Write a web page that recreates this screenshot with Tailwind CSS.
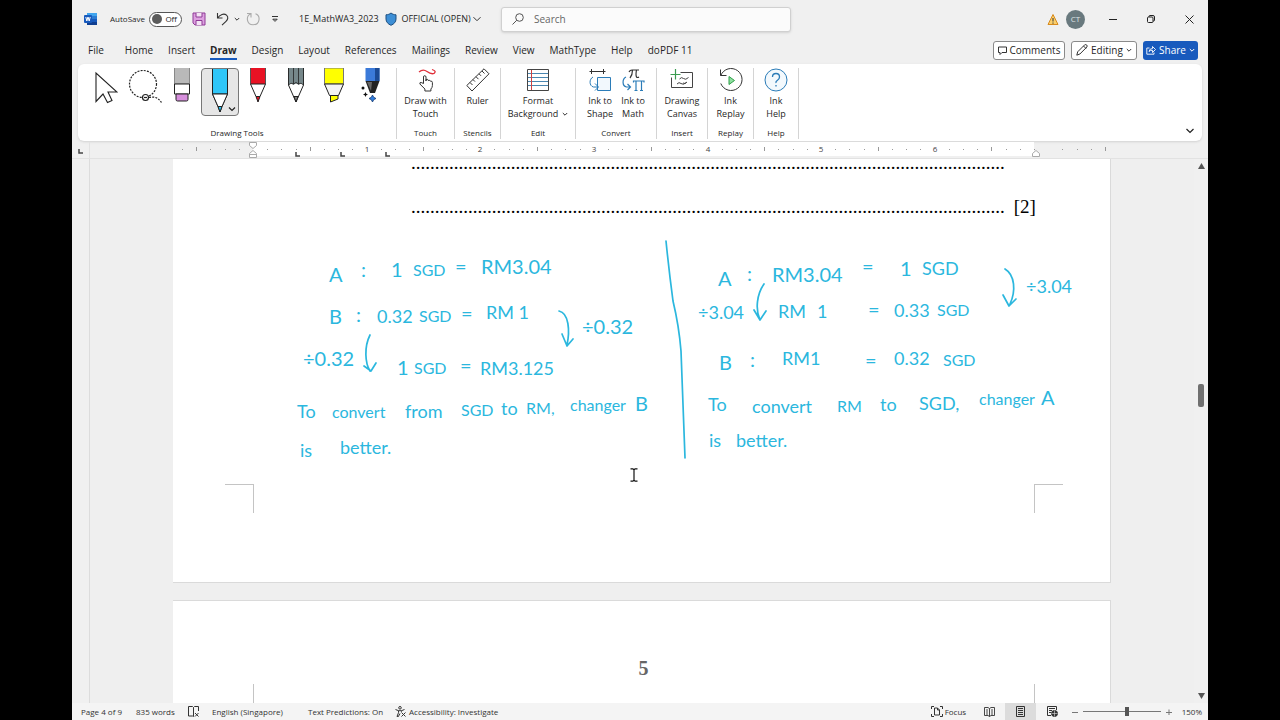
<!DOCTYPE html>
<html lang="en">
<head>
    <meta charset="UTF-8">
    <meta name="viewport" content="width=device-width, initial-scale=1.0">
    <title>1E_MathWA3_2023 - Word</title>
    <script src="https://cdn.jsdelivr.net/npm/@tailwindcss/browser@4"></script>
</head>

<body class="bg-black px-[72px] font-['Open_Sans',sans-serif] text-[#262626]">
<div class="flex flex-col h-screen bg-[#f0f0f0] overflow-hidden">

    <!-- Title bar -->
    <header class="flex items-center h-[38px] shrink-0 text-[9px] whitespace-nowrap">
        <div class="flex items-center w-[429px] shrink-0 pl-3">
            <svg class="w-[14px] h-[14px]" viewBox="0 0 14 14">
                <path d="M3 1h10v3H3z" fill="#41a5ee"/><path d="M3 4h10v3H3z" fill="#2b7cd3"/>
                <path d="M3 7h10v3H3z" fill="#185abd"/><path d="M3 10h10v3H3z" fill="#103f91"/>
                <rect x="0" y="3" width="8" height="8" rx="1" fill="#185abd"/>
                <path d="M1.800 5l1 4 1.200-4 1.200 4 1-4" fill="none" stroke="#fff" stroke-width="1"/>
            </svg>
            <label for="autosave" class="ml-3 w-[39px] text-[8px]">AutoSave</label>
            <span class="relative flex items-center w-[33px] h-[15px]">
                <input id="autosave" type="checkbox" class="appearance-none w-full h-full rounded-full border border-[#555] bg-white">
                <span class="absolute left-[3px] w-[10px] h-[10px] rounded-full bg-[#5c5c5c]"></span>
                <span class="absolute right-[5px] text-[8px]">Off</span>
            </span>
            <button aria-label="Save" class="ml-[10px]">
                <svg class="w-[14px] h-[14px]" viewBox="0 0 14 14" fill="#dda0e0" stroke="#8e3a96"><path d="M1 1h12v12H3l-2-2z"/><path d="M4 1v4h6V1M4 13V8.500h6V13" fill="#f3e3f4"/></svg>
            </button>
            <button aria-label="Undo" class="ml-[10px]">
                <svg class="w-[14px] h-[14px]" viewBox="0 0 14 14" fill="none" stroke="#333" stroke-width="1.100"><path d="M1.500 1v5h5M1.500 6C4 2.500 8 1 10.500 3.200c2.300 2 1.200 4.600-.5 6.200L6 13.200"/></svg>
            </button>
            <button aria-label="Undo history" class="ml-1">
                <svg class="w-[6px] h-[6px]" viewBox="0 0 6 6" fill="none" stroke="#333"><path d="M.8 2l2.200 2.200L5.200 2"/></svg>
            </button>
            <button aria-label="Repeat" class="ml-[6px]">
                <svg class="w-[14px] h-[14px]" viewBox="0 0 14 14" fill="none" stroke="#aaa" stroke-width="1.100"><path d="M1 1.500h4v4M4.800 1.800C-.5 4 .5 12.800 7 12.800c7 0 8-9 2.500-11"/></svg>
            </button>
            <button aria-label="Customize toolbar" class="ml-3">
                <svg class="w-[6px] h-[8px]" viewBox="0 0 6 8" fill="none" stroke="#333"><path d="M0 1.500h6M.8 4.200L3 6.400l2.200-2.200z"/></svg>
            </button>
            <span class="ml-[21px] w-[80px]">1E_MathWA3_2023</span>
            <button class="flex items-center ml-[6px]">
                <svg class="w-3 h-[14px]" viewBox="0 0 12 14"><path d="M6 1C4.500 2.200 3 2.700 1 2.800V7c0 3 2 5 5 6.300C9 12 11 10 11 7V2.800C9 2.700 7.500 2.200 6 1z" fill="#3d8fd6" stroke="#1d4f80"/></svg>
                <span class="ml-1 w-[70px]">OFFICIAL (OPEN)</span>
                <svg class="ml-[2px] w-2 h-2" viewBox="0 0 8 8" fill="none" stroke="#333"><path d="M.5 2.200L4 5.700l3.500-3.500"/></svg>
            </button>
        </div>
        <label class="flex items-center w-[290px] h-[25px] px-[10px] gap-[10px] bg-[#fbfbfb] border border-[#d0d0d0] rounded-[3px] shadow-sm">
            <svg class="w-3 h-3" viewBox="0 0 12 12" fill="none" stroke="#555"><circle cx="7.500" cy="4.500" r="3.800"/><path d="M4.800 7.200L.5 11.500"/></svg>
            <input type="text" aria-label="Search" placeholder="Search" class="flex-1 text-[10px] outline-none placeholder:text-[#666]">
        </label>
        <div class="flex items-center ml-auto pr-[14px]">
            <svg class="w-3 h-[13px]" viewBox="0 0 12 13"><path d="M6 1.500l5 10H1z" fill="#fbcf6b" stroke="#d78a1c"/><path d="M6 5v3.500M6 9.500v1.200" stroke="#333"/></svg>
            <button class="ml-[7px] w-[19px] h-[19px] rounded-full bg-[#69797e] text-[8px] text-[#dde3e5]">CT</button>
            <button aria-label="Minimize" class="ml-6"><svg class="w-2 h-2" viewBox="0 0 8 8" stroke="#222"><path d="M0 4.500h8"/></svg></button>
            <button aria-label="Restore" class="ml-[30px]"><svg class="w-2 h-2" viewBox="0 0 8 8" fill="none" stroke="#222"><rect x=".5" y="2" width="5.500" height="5.500" rx="1"/><path d="M2 2V1.500q0-1 1-1h3q1.500 0 1.500 1.500v3q0 1-1 1H6"/></svg></button>
            <button aria-label="Close" class="ml-[30px]"><svg class="w-[9px] h-[9px]" viewBox="0 0 9 9" stroke="#222"><path d="M.5.5l8 8M8.500.5l-8 8"/></svg></button>
        </div>
    </header>

    <!-- Ribbon tabs -->
    <nav class="flex items-center h-[24px] shrink-0 pl-4 pr-[10px] text-[10px] whitespace-nowrap">
        <div class="flex items-center gap-[15px]">
            <a href="#" class="mr-[6px]">File</a>
            <a href="#">Home</a>
            <a href="#">Insert</a>
            <a href="#" class="font-bold border-b-2 border-[#185abd] leading-[16px] mt-[2px]">Draw</a>
            <a href="#">Design</a>
            <a href="#">Layout</a>
            <a href="#">References</a>
            <a href="#">Mailings</a>
            <a href="#">Review</a>
            <a href="#">View</a>
            <a href="#">MathType</a>
            <a href="#">Help</a>
            <a href="#">doPDF 11</a>
        </div>
        <div class="flex items-center gap-[6px] ml-auto">
            <button class="flex items-center justify-center gap-[3px] w-[72px] h-[19px] bg-white border border-[#8a8a8a] rounded-[3px]">
                <svg class="w-[9px] h-[9px]" viewBox="0 0 9 9" fill="none" stroke="#333"><path d="M.5 1h8v5.500H4L2 8.500v-2H.5z"/></svg>Comments
            </button>
            <button class="flex items-center justify-center gap-[3px] w-[66px] h-[19px] bg-white border border-[#8a8a8a] rounded-[3px]">
                <svg class="w-3 h-3" viewBox="0 0 12 12" fill="none" stroke="#333"><path d="M.8 11.200l.9-3.400 7-7q1.200-.6 2 .2t.2 2l-7 7zM7.500 2l2.500 2.500"/></svg>Editing
                <svg class="w-[6px] h-[6px]" viewBox="0 0 6 6" fill="none" stroke="#333"><path d="M.8 2L3 4.200 5.200 2"/></svg>
            </button>
            <button class="flex items-center justify-center gap-[3px] w-[55px] h-[19px] bg-[#185abd] text-white rounded-[3px]">
                <svg class="w-[10px] h-[10px]" viewBox="0 0 10 10" fill="none" stroke="#fff" stroke-width=".9"><path d="M3.500 3H.8v6.200H8V7.500M3 6.500q.5-3 3.500-3V1.500l3 3-3 3V5.300Q4.500 5 3 6.500z"/></svg>Share
                <svg class="w-[6px] h-[6px]" viewBox="0 0 6 6" fill="none" stroke="#fff"><path d="M.8 2L3 4.200 5.200 2"/></svg>
            </button>
        </div>
    </nav>

    <!-- Ribbon -->
    <section class="flex items-stretch h-[77px] shrink-0 mx-[6px] mt-[2px] mb-px pt-1 pb-[2px] bg-white rounded-[6px] shadow text-[9px] leading-[13px] text-center">
        <div class="flex flex-col w-[319px] border-r border-[#d4d4d4]">
            <div class="flex pl-[9px]">
                <button aria-label="Select" class="flex justify-center w-[38px] h-[49px]">
                    <svg class="w-6 h-[38px]" viewBox="0 0 24 38" fill="#fff" stroke="#222" stroke-width="1.100"><path d="M2 5v28.500l7-7.500 4.500 8.500 4.500-2-4-8.500h9z"/></svg>
                </button>
                <button aria-label="Lasso select" class="flex justify-center w-[38px] h-[49px]">
                    <svg class="w-[36px] h-[38px]" viewBox="0 0 36 38" fill="none" stroke="#222" stroke-width="1.200"><g stroke-dasharray="2 1.200"><circle cx="17" cy="16" r="13.500"/><path d="M23 29.500q8-2 12.500 5"/></g><circle cx="19.500" cy="29.500" r="3" fill="#fff"/><path d="M18 29.500h3"/></svg>
                </button>
                <button aria-label="Eraser" class="flex justify-center w-[38px] h-[49px]">
                    <svg class="w-[18px] h-[36px]" viewBox="0 0 18 36" stroke="#222"><path d="M1.500 0v16h15V0" fill="#b9b9b9" stroke="#888"/><path d="M1.500 16h15v10h-15z" fill="#fff"/><path d="M3 26h12v5.500q0 1.500-1.500 1.500h-9Q3 33 3 31.500z" fill="#d68fdc"/></svg>
                </button>
                <button aria-label="Pen, cyan" class="relative flex justify-center w-[38px] h-[48px] bg-[#e6e6e6] border border-[#777] rounded-[4px]">
                    <svg class="w-[18px] h-[45px]" viewBox="0 0 18 45" stroke="#222"><path d="M1.500 0v25h15V0z" fill="#2fc6f8" stroke="none"/><path d="M1.500 0v25L7 37.500 9 43l2-5.500L16.500 25V0M1.500 25h15" fill="none"/><path d="M1.500 25h15L11 37.500H7z" fill="#fff"/><path d="M7 37.500h4L9 43z" fill="#2fc6f8"/></svg>
                    <svg class="absolute right-[2px] bottom-[2px] w-2 h-2" viewBox="0 0 8 8" fill="none" stroke="#222" stroke-width="1.200"><path d="M1 2.500l3 3 3-3"/></svg>
                </button>
                <button aria-label="Pen, red" class="flex justify-center w-[38px] h-[49px]">
                    <svg class="w-[18px] h-[36px]" viewBox="0 0 18 36" stroke="#222"><path d="M1.500 0v16h15V0z" fill="#e81224" stroke="none"/><path d="M1.500 0v16M16.500 0v16" stroke="#555"/><path d="M1.500 16h15L11 28.500H7z" fill="#fff"/><path d="M7 28.500h4L9 34z" fill="#e81224"/></svg>
                </button>
                <button aria-label="Pencil" class="flex justify-center w-[38px] h-[49px]">
                    <svg class="w-[18px] h-[36px]" viewBox="0 0 18 36" stroke="#222"><path d="M1.500 0v17L9 34l7.500-17V0" fill="#fff"/><path d="M1.500 0v17q2.500-3 5 0 2.500-3 5 0 2.500-3 5 0V0z" fill="#76878a" stroke="none"/><path d="M1.500 0v17q2.500-3 5-1 2.500-3 5 0 2.500-2 5 1V0M6.500 0v16M11.500 0v16" fill="none" stroke-width=".8"/><path d="M7 28.500h4L9 34z" fill="#888"/></svg>
                </button>
                <button aria-label="Highlighter" class="flex justify-center w-[38px] h-[49px]">
                    <svg class="w-[22px] h-[36px]" viewBox="0 0 22 36" stroke="#222"><path d="M1.500 0v16h19V0z" fill="#ff0" stroke="#777"/><path d="M1.500 16h19l-5 11.500h-9z" fill="#f4f4f4"/><path d="M7.500 27.500h7.500v3.500l-7.500 3z" fill="#ff0"/></svg>
                </button>
                <button aria-label="Pen, galaxy" class="flex justify-center w-[38px] h-[49px]">
                    <svg class="w-[24px] h-[36px]" viewBox="0 0 24 36"><path d="M5.500 0h14v13h-14z" fill="#3b7ad9"/><path d="M15 0h4.500v13H15z" fill="#1b4a94"/><path d="M5.500 13h14L15 25h-5z" fill="#222"/><path d="M7 14h5l-1 9z" fill="#666"/><path d="M12.500 27l1.200 2.300L16 30.500l-2.300 1.200L12.500 34l-1.200-2.300L9 30.500l2.300-1.200z" fill="#2d7de0" stroke="#173a70" stroke-width=".8"/><path d="M5.500 24l.8 1.700L8 26.500l-1.700.8-.8 1.700-.8-1.700L3 26.500l1.700-.8z" fill="#111"/><circle cx="3" cy="20" r="1.500" fill="#111"/></svg>
                </button>
            </div>
            <span class="mt-auto text-[8px]">Drawing Tools</span>
        </div>
        <div class="flex flex-col w-[58px] border-r border-[#d4d4d4]">
            <button>
                <svg class="mx-auto mb-[2px] w-6 h-6" viewBox="0 0 24 24" fill="none" stroke="#333"><path d="M5 4q4-3.500 8-.5t7 2q3-2.500-2-4" stroke="#e0303a" stroke-width="1.300"/><path d="M9.500 15.500V9q0-1.300 1.200-1.300T12 9v4-1.500q2.200-.8 2.200 1 2-.8 2.200.7 2-.4 2 1.300v3q0 2-1.500 3.500V23h-6v-2l-5-5q-.5-1.800 1.300-1.500z"/></svg>
                Draw with<br>Touch
            </button>
            <span class="mt-auto text-[8px]">Touch</span>
        </div>
        <div class="flex flex-col w-[46px] border-r border-[#d4d4d4]">
            <button>
                <svg class="mx-auto mb-[2px] w-6 h-6" viewBox="0 0 24 24" fill="none" stroke="#333"><path d="M.8 17.500L18 .8l5 5L6 23zM4 14.500l2.500 2.500M7 11.600l2 2M10 8.700l2.500 2.500M13 5.800l2 2M16 3l2.500 2.500"/></svg>
                Ruler
            </button>
            <span class="mt-auto text-[8px]">Stencils</span>
        </div>
        <div class="flex flex-col w-[75px] border-r border-[#d4d4d4]">
            <button>
                <svg class="mx-auto mb-[2px] w-6 h-6" viewBox="0 0 24 24" fill="none" stroke="#444"><path d="M1.500 1.500h21v21h-21z"/><path d="M2 5.500h20M2 9.500h20M2 13.500h20M2 17.500h20" stroke="#4a86b0"/><path d="M5.500 2v20" stroke="#d04040"/></svg>
                Format<br><span class="flex items-center justify-center gap-1">Background<svg class="w-[6px] h-[6px]" viewBox="0 0 6 6" fill="none" stroke="#333"><path d="M.8 2L3 4.200 5.200 2"/></svg></span>
            </button>
            <span class="mt-auto text-[8px]">Edit</span>
        </div>
        <div class="flex flex-col w-[81px] border-r border-[#d4d4d4]">
            <div class="flex justify-center gap-2">
                <button>
                    <svg class="mx-auto mb-[2px] w-6 h-6" viewBox="0 0 24 24" fill="none" stroke="#2b7cb8"><path d="M1.500 3.500h16M3.500 1v5M15.500 1v5" stroke="#333"/><path d="M9.500 9.500h13v13h-13z" fill="#f2f8fd"/><path d="M5 9C1 11 1 18 5.500 19H10M7 15.500l3.500 3.500L7 22.500"/></svg>
                    Ink to<br>Shape
                </button>
                <button>
                    <svg class="mx-auto mb-[2px] w-6 h-6" viewBox="0 0 24 24" fill="none" stroke="#2b7cb8" stroke-width="1.200"><path d="M8 4q1-2 3-2h7M11.500 2q0 5-2.500 8M15.500 2q-1 5 0 7 1 1 2.500 0" stroke="#333"/><path d="M12.500 14.500v-1.500H23v1.500M15 13v9.500M20.500 13v9.500M13.500 22.500h3M19 22.500h3M5 9C1 11 1 18 5.500 19H9M6.500 16l3 3-3 3"/></svg>
                    Ink to<br>Math
                </button>
            </div>
            <span class="mt-auto text-[8px]">Convert</span>
        </div>
        <div class="flex flex-col w-[51px] border-r border-[#d4d4d4]">
            <button>
                <svg class="mx-auto mb-[2px] w-6 h-6" viewBox="0 0 24 24" fill="none" stroke="#444"><path d="M10.500 4.500h12v15h-21V9.500"/><path d="M.5 6.500h10M5.500 1v10.500" stroke="#3a9b50" stroke-width="1.200"/><path d="M9.500 11q2-2.500 4-.5t5-1M7 16q2-2.500 4-.5t5.500-1M13 15q2 1.500 4-1"/></svg>
                Drawing<br>Canvas
            </button>
            <span class="mt-auto text-[8px]">Insert</span>
        </div>
        <div class="flex flex-col w-[46px] border-r border-[#d4d4d4]">
            <button>
                <svg class="mx-auto mb-[2px] w-6 h-6" viewBox="0 0 24 24" fill="none" stroke="#333"><path d="M1.500 1.500v6h6M1.800 7.500A11 11 0 1 1 1.800 15.500"/><path d="M10 8.500v8l5.500-4z" fill="#8fe0a0" stroke="#2f9e49"/></svg>
                Ink<br>Replay
            </button>
            <span class="mt-auto text-[8px]">Replay</span>
        </div>
        <div class="flex flex-col w-[45px] border-r border-[#d4d4d4]">
            <button>
                <svg class="mx-auto mb-[2px] w-6 h-6" viewBox="0 0 24 24" fill="none" stroke="#2b7cb8"><circle cx="12" cy="12" r="11" fill="#f3f9fd"/><path d="M8.500 9q0-3.500 3.500-3.500T15.500 9q0 2-2 3.200T12 15M12 17v1.500" stroke-width="1.300"/></svg>
                Ink<br>Help
            </button>
            <span class="mt-auto text-[8px]">Help</span>
        </div>
        <button aria-label="Ribbon display options" class="self-end ml-auto mr-2 mb-1">
            <svg class="w-2 h-2" viewBox="0 0 8 8" fill="none" stroke="#222" stroke-width="1.200"><path d="M.5 2L4 5.500 7.500 2"/></svg>
        </button>
    </section>

    <!-- Horizontal ruler -->
    <div class="flex h-[17px] shrink-0 border-b border-[#e2e2e2]">
        <div class="w-[18px] pl-[6px] h-full border-r border-[#e2e2e2]">
            <svg class="w-[6px] h-4" viewBox="0 0 6 16" fill="none" stroke="#444" stroke-width="1.500"><path d="M1 7v4h4"/></svg>
        </div>
        <div class="flex-1 flex justify-center">
            <svg class="w-[938px] h-4 shrink-0" viewBox="0 0 938 16" font-family="Open Sans, sans-serif" font-size="8" fill="#444" text-anchor="middle">
                <rect x="80" y="0" width="781" height="14" fill="#fff"/>
                <g id="ticks" stroke="#999"></g>
                <text x="194" y="10">1</text><text x="307" y="10">2</text><text x="421" y="10">3</text>
                <text x="535" y="10">4</text><text x="648" y="10">5</text><text x="762" y="10">6</text>
                <g fill="none" stroke="#444" stroke-width="1.500"><path d="M123 10v4h4M168 10v4h4M213 10v4h4"/></g>
                <g fill="#fff" stroke="#aaa"><path d="M76.500.5h7v3L80 6.500l-3.500-3zM76.500 15.500v-4L80 8.500l3.500 3v4zM76.500 12.500h7M859.500 14.500v-3l3.500-3 3.500 3v3z"/></g>
            </svg>
        </div>
        <div class="w-[14px]"></div>
    </div>

    <!-- Document -->
    <main class="flex flex-1 min-h-0">
        <div class="w-[18px] shrink-0 border-r border-[#dcdcdc]"></div>
        <div class="flex-1 flex flex-col items-center gap-[17px] overflow-hidden bg-[#efefef] font-['Liberation_Serif',serif] text-black">
            <article class="relative w-[938px] h-[424px] shrink-0 bg-white border-b border-r border-[#dadada]">
                <div class="pl-[238px] text-[19px] leading-[44px] -mt-[18px]">
                    <p id="answer1" class="h-[44px] w-[600px]"></p>
                    <p class="flex gap-[9px] h-[44px]"><span id="answer2"></span><span>[2]</span></p>
                </div>

                <!-- Ink layer -->
                <svg class="absolute inset-0 w-full h-full" viewBox="173 159 937 423" fill="#2bb7de" font-family="Lato, sans-serif">
                    <g font-size="20">
                        <text x="329" y="282">A</text><text x="361" y="277">:</text><text x="391" y="277">1</text>
                        <text x="455" y="274">=</text><text x="481" y="274">RM3.04</text>
                        <text x="329" y="324">B</text><text x="356" y="322">:</text><text x="461" y="321">=</text>
                        <text x="582" y="334">÷0.32</text>
                        <text x="303" y="366">÷0.32</text><text x="397" y="375">1</text><text x="460" y="373">=</text>
                        <text x="635" y="411">B</text>
                        <text x="718" y="286">A</text><text x="747" y="281">:</text><text x="772" y="282">RM3.04</text>
                        <text x="862" y="274">=</text><text x="900" y="276">1</text>
                        <text x="868" y="317">=</text>
                        <text x="719" y="370">B</text><text x="750" y="367">:</text><text x="865" y="368">=</text>
                        <text x="1041" y="405">A</text>
                    </g>
                    <g font-size="18">
                        <text x="377" y="323">0.32</text><text x="486" y="319">RM 1</text><text x="480" y="375">RM3.125</text>
                        <text x="297" y="418">To</text><text x="405" y="418">from</text><text x="501" y="415">to</text>
                        <text x="300" y="457">is</text><text x="340" y="454">better.</text>
                        <text x="922" y="275">SGD</text><text x="1026" y="293">÷3.04</text>
                        <text x="698" y="319">÷3.04</text><text x="778" y="318">RM</text><text x="817" y="318">1</text>
                        <text x="894" y="317">0.33</text>
                        <text x="782" y="365">RM1</text><text x="894" y="365">0.32</text>
                        <text x="708" y="411">To</text><text x="752" y="413">convert</text><text x="880" y="411">to</text>
                        <text x="919" y="410">SGD,</text>
                        <text x="709" y="447">is</text><text x="736" y="447">better.</text>
                    </g>
                    <g font-size="16">
                        <text x="413" y="276">SGD</text><text x="419" y="322">SGD</text><text x="414" y="374">SGD</text>
                        <text x="332" y="418">convert</text><text x="461" y="416">SGD</text><text x="526" y="414">RM,</text>
                        <text x="570" y="411">changer</text>
                        <text x="937" y="316">SGD</text><text x="943" y="366">SGD</text>
                        <text x="837" y="412">RM</text><text x="979" y="405">changer</text>
                    </g>

                    <g fill="none" stroke="#2bb7de" stroke-width="1.700" stroke-linecap="round" stroke-linejoin="round">
                        <path d="M666 241q3 30 7 60 6 25 8 50 2 50 4 107"/>
                        <path d="M559 311c10 2 11 20 8 34M562 334l5 12 6-7"/>
                        <path d="M370 335c-6 12-5 28 0 36M364 366l7 5 5-8"/>
                        <path d="M764 284c-7 10-9 25-4 36M754 310l6 10 6-9"/>
                        <path d="M1005 269c10 6 11 22 5 35M1003 295l6 11 7-7"/>
                    </g>
                </svg>

                <div class="absolute bottom-[69px] left-[52px] right-[47px] flex justify-between">
                    <div class="w-[29px] h-[29px] border-t border-r border-[#c4c4c4]"></div>
                    <div class="w-[29px] h-[29px] border-t border-l border-[#c4c4c4]"></div>
                </div>

                <svg class="absolute left-[457px] top-[309px] w-2 h-[14px]" viewBox="0 0 8 14" fill="none" stroke="#111" stroke-width="1.200"><path d="M.5.8H3l1 1 1-1h2.500M.5 13.200H3l1-1 1 1h2.500M4 1.800v10.400"/></svg>
            </article>
            <article class="w-[938px] h-[400px] shrink-0 bg-white border-t border-r border-[#dadada]">
                <p class="h-[83px] pt-[55px] pl-1 text-center text-[20px] leading-[24px] font-bold text-[#666]">5</p>
                <div class="h-[29px] ml-[80px] mr-[75px] border-x border-[#c4c4c4]"></div>
            </article>
        </div>
        <!-- Vertical scrollbar -->
        <div class="relative flex flex-col items-center justify-between w-[14px] shrink-0 py-1">
            <svg class="w-[7px] h-[6px]" viewBox="0 0 7 6" fill="#555"><path d="M3.500 0L7 6H0z"/></svg>
            <div class="absolute top-[225px] w-[6px] h-[23px] rounded-[2px] bg-[#707070]"></div>
            <svg class="w-[7px] h-[6px]" viewBox="0 0 7 6" fill="#555"><path d="M0 0h7L3.500 6z"/></svg>
        </div>
    </main>

    <!-- Status bar -->
    <footer class="flex items-center h-[17px] shrink-0 pl-[9px] pr-[6px] bg-[#f4f4f4] text-[8px] text-[#333] whitespace-nowrap">
        <span class="w-[55px]">Page 4 of 9</span>
        <span class="w-[52px]">835 words</span>
        <svg class="w-[11px] h-[11px]" viewBox="0 0 11 11" fill="none" stroke="#333"><path d="M5.500 1.500L4.500.5h-4v9.500h4l1 .5zM5.500 1.500l1-1h4v4.500M7 7l3.500 3.500M10.500 7L7 10.500"/></svg>
        <span class="ml-[13px] w-[96px]">English (Singapore)</span>
        <span class="w-[87px]">Text Predictions: On</span>
        <svg class="w-3 h-[11px] mr-[2px]" viewBox="0 0 12 11" fill="none" stroke="#333"><circle cx="5" cy="1.800" r="1.300"/><path d="M.5 3.500l3 1.200v2L2 10.500l1.200.3L5 7.500M9.500 3.500l-3 1.200v1M6.500 6.500l4 4M10.500 6.500l-4 4M3.500 4.700h3"/></svg>
        <span>Accessibility: Investigate</span>
        <div class="flex items-center ml-auto h-full">
            <button class="flex items-center gap-[2px] w-[43px]">
                <svg class="w-[12px] h-[11px]" viewBox="0 0 12 11" fill="none" stroke="#333"><path d="M3 .5H.5V3M.5 8v2.500H3M9 .5h2.500V3M11.500 8v2.500H9M3.500 2h3l2 2v5h-5zM6.500 2v2h2"/></svg>Focus
            </button>
            <button aria-label="Read mode" class="flex justify-center w-[31px]"><svg class="w-[11px] h-[10px]" viewBox="0 0 11 10" fill="none" stroke="#333"><path d="M5.500 1.500L4 .5H.5v8H4l1.500 1L7 8.500h3.500v-8H7zM5.500 1.500v8M2 3h2M2 5h2M2 7h2M7 3h2M7 5h2M7 7h2" stroke-width=".9"/></svg></button>
            <button aria-label="Print layout" class="flex justify-center items-center w-[31px] h-full bg-[#dcdcdc]"><svg class="w-[9px] h-[11px]" viewBox="0 0 9 11" fill="none" stroke="#333"><path d="M.5.5h8v10h-8zM2 2.500h5M2 4.500h5M2 6.500h5M2 8.500h5"/></svg></button>
            <button aria-label="Web layout" class="flex justify-center w-[33px]"><svg class="w-[11px] h-[11px]" viewBox="0 0 11 11" fill="none" stroke="#333"><path d="M4 9.500H.5v-9h9V4M2 2.500h6M2 4.500h3M2 6.500h2"/><circle cx="7.500" cy="7.500" r="3" fill="#333"/><path d="M4.500 7.500h6M7.500 4.500v6" stroke="#ddd" stroke-width=".6"/></svg></button>
            <button aria-label="Zoom out" class="ml-[3px]"><svg class="w-[6px] h-[6px]" viewBox="0 0 6 6" stroke="#777"><path d="M0 3.500h6"/></svg></button>
            <input type="range" aria-label="Zoom" min="0" max="100" value="57" class="mx-[5px] w-[78px] h-[9px] appearance-none bg-[linear-gradient(#777,#777)] bg-[length:100%_1px] bg-center bg-no-repeat [&::-webkit-slider-thumb]:appearance-none [&::-webkit-slider-thumb]:w-[4px] [&::-webkit-slider-thumb]:h-[9px] [&::-webkit-slider-thumb]:bg-[#555]">
            <button aria-label="Zoom in"><svg class="w-[6px] h-[6px]" viewBox="0 0 6 6" stroke="#777"><path d="M0 3.500h6M3 .5v6"/></svg></button>
            <button class="ml-[10px]">150%</button>
        </div>
    </footer>
</div>

<script>
    // answer lines are rows of leader dots
    document.getElementById('answer1').innerText = '.'.repeat(125);
    document.getElementById('answer2').innerText = '.'.repeat(125);

    // ruler: a dot each eighth of an inch, a short bar each half
    let ticks = '';
    for (let i = -5; i <= 60; i++) {
        if (i >= 0 && i % 8 === 0) continue;
        const x = Math.round(80 + i * 14.2) + 0.5;
        ticks += Math.abs(i) % 4 === 0 ? `<path d="M${x} 5v4"/>` : `<path d="M${x} 7v1"/>`;
    }
    document.getElementById('ticks').innerHTML = ticks;
</script>
</body>
</html>
